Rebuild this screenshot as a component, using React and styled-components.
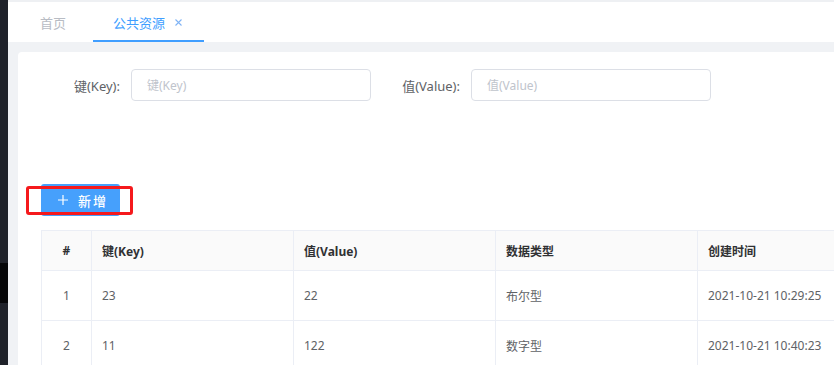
import styled, { createGlobalStyle } from "styled-components";

const GlobalStyle = createGlobalStyle`
  html, body {
    margin: 0;
    padding: 0;
    width: 834px;
    height: 365px;
    overflow: hidden;
    background: #f0f2f5;
    font-family: "Noto Sans", "Noto Sans CJK SC", sans-serif;
  }
  * { box-sizing: border-box; }
`;

const rows = [
  { id: 1, key: "23", value: "22", type: "布尔型", time: "2021-10-21 10:29:25" },
  { id: 2, key: "11", value: "122", type: "数字型", time: "2021-10-21 10:40:23" },
];

function App() {
  return (
    <Layout>
      <GlobalStyle />
      <Sidebar>
        <SideBand />
      </Sidebar>
      <Main>
        <TabBar>
          <Tab>首页</Tab>
          <Tab active>
            公共资源
            <Close viewBox="0 0 7 7">
              <path d="M0.5 0.5 L6.5 6.5 M6.5 0.5 L0.5 6.5" />
            </Close>
          </Tab>
        </TabBar>
        <Content>
          <Card>
            <SearchForm>
              <FormItem>
                <Label>键(Key):</Label>
                <Input placeholder="键(Key)" />
              </FormItem>
              <FormItem>
                <Label>值(Value):</Label>
                <Input placeholder="值(Value)" />
              </FormItem>
            </SearchForm>

            <Toolbar>
              <AddButton>
                <Plus viewBox="0 0 10 10">
                  <path d="M5 0 V10 M0 5 H10" />
                </Plus>
                新增
                <Highlight />
              </AddButton>
            </Toolbar>

            <Table>
              <colgroup>
                <col style={{ width: 50 }} />
                <col style={{ width: 202 }} />
                <col style={{ width: 202 }} />
                <col style={{ width: 202 }} />
                <col style={{ width: 202 }} />
              </colgroup>
              <thead>
                <tr>
                  <Th center>#</Th>
                  <Th>键(Key)</Th>
                  <Th>值(Value)</Th>
                  <Th>数据类型</Th>
                  <Th>创建时间</Th>
                </tr>
              </thead>
              <tbody>
                {rows.map((r) => (
                  <tr key={r.id}>
                    <Td center>{r.id}</Td>
                    <Td>{r.key}</Td>
                    <Td>{r.value}</Td>
                    <Td>{r.type}</Td>
                    <Td>{r.time}</Td>
                  </tr>
                ))}
              </tbody>
            </Table>
          </Card>
        </Content>
      </Main>
    </Layout>
  );
}

const Layout = styled.div`
  display: flex;
  width: 834px;
  height: 365px;
  overflow: hidden;
`;

const Sidebar = styled.div`
  width: 8px;
  flex-shrink: 0;
  background: #1f222a;
  padding-top: 263px;
`;

const SideBand = styled.div`
  height: 40px;
  background: #050608;
`;

const Main = styled.div`
  flex: 1;
  min-width: 0;
  display: flex;
  flex-direction: column;
`;

const TabBar = styled.div`
  height: 42px;
  flex-shrink: 0;
  background: #fff;
  border-top: 2px solid #eef0f3;
  display: flex;
  gap: 7px;
  padding-left: 12px;
`;

const Tab = styled.div`
  height: 40px;
  padding: 2px 20px 0 20px;
  width: ${(p) => (p.active ? "111px" : "auto")};
  display: flex;
  align-items: center;
  font-size: 13px;
  color: ${(p) => (p.active ? "#409eff" : "#b8bcc4")};
  border-bottom: 2px solid ${(p) => (p.active ? "#409eff" : "transparent")};
`;

const Close = styled.svg`
  width: 7px;
  height: 7px;
  margin-left: 10px;
  stroke: #7fb3f5;
  stroke-width: 1.1;
  fill: none;
`;

const Content = styled.div`
  flex: 1;
  padding: 10px 0 0 10px;
  background: #f0f2f5;
`;

const Card = styled.div`
  background: #fff;
  border-radius: 4px 0 0 0;
  height: 100%;
  padding: 17px 0 0 23px;
  overflow: hidden;
`;

const SearchForm = styled.div`
  display: flex;
  gap: 10px;
`;

const FormItem = styled.div`
  display: flex;
  align-items: center;
`;

const Label = styled.label`
  width: 90px;
  padding-right: 11px;
  text-align: right;
  font-size: 13px;
  color: #606266;
`;

const Input = styled.input`
  width: 240px;
  height: 32px;
  border: 1px solid #dcdfe6;
  border-radius: 4px;
  padding: 0 15px;
  font-family: inherit;
  font-size: 12px;
  color: #606266;
  outline: none;
  &::placeholder {
    color: #c0c4cc;
  }
`;

const Toolbar = styled.div`
  margin-top: 83px;
  height: 32px;
`;

const AddButton = styled.button`
  position: relative;
  width: 79px;
  height: 32px;
  border: none;
  border-radius: 3px;
  background: #46a0fc;
  color: #fff;
  font-family: inherit;
  font-size: 13px;
  font-weight: 500;
  display: flex;
  align-items: center;
  padding: 0 0 0 17px;
  letter-spacing: 2px;
`;

const Plus = styled.svg`
  width: 10px;
  height: 10px;
  margin-right: 10px;
  stroke: #fff;
  stroke-width: 1.2;
  fill: none;
`;

const Highlight = styled.span`
  position: absolute;
  left: -15px;
  right: -13px;
  top: 2px;
  bottom: 1px;
  border: 3px solid #f5191c;
  border-radius: 3px;
  pointer-events: none;
`;

const Table = styled.table`
  margin-top: 14px;
  border-collapse: collapse;
  table-layout: fixed;
  width: 858px;
  font-size: 12px;
`;

const Th = styled.th`
  height: 40px;
  background: #fafafa;
  border: 1px solid #ebeef5;
  padding: 0 10px;
  text-align: ${(p) => (p.center ? "center" : "left")};
  font-weight: 700;
  color: #303133;
`;

const Td = styled.td`
  height: 50px;
  border: 1px solid #ebeef5;
  padding: 0 10px;
  text-align: ${(p) => (p.center ? "center" : "left")};
  color: #606266;
`;

export default App;
